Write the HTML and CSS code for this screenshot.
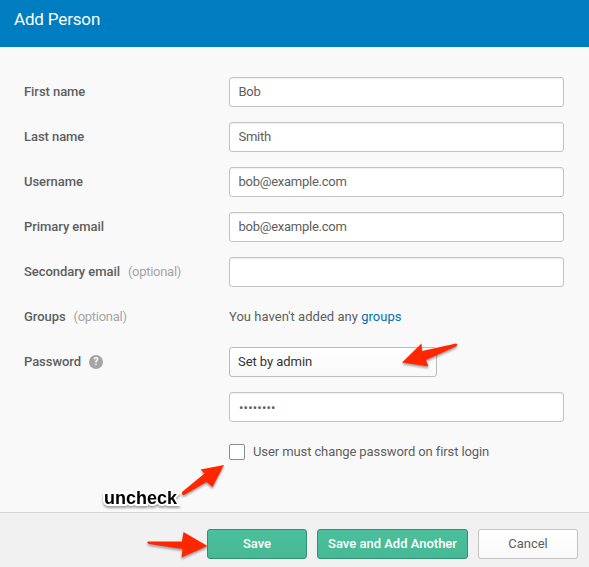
FILE: index.html
```html
<!DOCTYPE html>
<html lang="en">
<head>
<meta charset="utf-8">
<title>Add Person</title>
<link rel="stylesheet" href="styles.css">
</head>
<body>
<form class="dialog">
  <header class="header"><h1 class="title">Add Person</h1></header>
  <main class="fields">
    <div class="row"><label class="label" for="first">First name</label><input class="input" id="first" value="Bob"></div>
    <div class="row"><label class="label" for="last">Last name</label><input class="input" id="last" value="Smith"></div>
    <div class="row"><label class="label" for="user">Username</label><input class="input" id="user" value="bob@example.com"></div>
    <div class="row"><label class="label" for="email">Primary email</label><input class="input" id="email" value="bob@example.com"></div>
    <div class="row"><label class="label" for="second"><span>Secondary email</span><span class="optional">(optional)</span></label><input class="input" id="second"></div>
    <div class="row"><span class="label"><span>Groups</span><span class="optional">(optional)</span></span><p class="note">You haven't added any <a class="link">groups</a></p></div>
    <div class="row"><span class="label"><span>Password</span><span class="help">?</span></span><button type="button" class="select">Set by admin</button></div>
    <div class="row"><span class="label"></span><input class="input dots" value="••••••••"></div>
    <div class="row"><span class="label"></span><label class="check"><span class="box"></span><span>User must change password on first login</span></label></div>
  </main>
  <footer class="footer">
    <button type="button" class="button primary save">Save</button>
    <button type="button" class="button primary another">Save and Add Another</button>
    <button type="button" class="button cancel">Cancel</button>
  </footer>
  <svg class="arrows" width="589" height="567" viewBox="0 0 589 567">
    <path d="M402 362.500L421.500 343.500L422 351L456 343.500Q458.500 344.500 456 346.500L426 360L428.500 366.500Z"/>
    <path d="M224 465L200.500 469.500L204.500 473.500L182 492Q181.500 496 185 494.500L206.500 482L212.500 487Z"/>
    <path d="M207.500 546L183.500 532L182 541.500L148 541.500Q146 543 149 544L182.500 549L181.500 557.500Z"/>
  </svg>
  <span class="callout">uncheck</span>
</form>
</body>
</html>
```
FILE: styles.css
```css
* { box-sizing: border-box; }
body { margin: 0; background: #f9f9f9; color: #5e5e5e; font: 13px/18px Roboto, "Liberation Sans", sans-serif; }
.dialog { position: relative; display: flex; flex-direction: column; width: 589px; height: 567px; overflow: hidden; }
.header { height: 47px; padding: 8px 14px 0; background: #007dc1; color: #fff; }
.title { margin: 0; font-size: 17px; line-height: 22px; font-weight: 400; letter-spacing: -0.16px; }
.fields { flex: 1; display: flex; flex-direction: column; gap: 15px; padding: 30px 25px 0 24px; }
.row { display: flex; align-items: center; height: 30px; }
.label { display: flex; align-items: center; gap: 8px; width: 205px; font-weight: 500; letter-spacing: -0.06px; white-space: nowrap; }
.optional { color: #a5a5a5; font-weight: 400; letter-spacing: -0.28px; }
.help { width: 14px; height: 14px; border-radius: 50%; background: #a5a5a5; color: #fff; font-size: 10px; line-height: 14px; font-weight: 700; text-align: center; }
.input { width: 335px; height: 30px; padding: 0 9px 1px 8.5px; border: 1px solid #c3c3c3; border-radius: 3px; background: #fff; box-shadow: inset 0 1px 2px #eee; color: #5e5e5e; font: inherit; letter-spacing: -0.25px; outline: 0; }
.dots { padding: 0 9px; letter-spacing: 0.2px; }
.note { margin: 0; letter-spacing: 0.03px; }
.link { color: #0071b3; }
.select { width: 208px; height: 30px; padding: 0 8px; border: 1px solid #bcbcbc; border-radius: 3px; background: linear-gradient(#fff, #f9f9f9); color: #333; font: inherit; text-align: left; letter-spacing: -0.06px; }
.check { display: flex; align-items: center; gap: 8px; letter-spacing: -0.1px; }
.box { width: 16px; height: 16px; border: 1px solid #8c8c8c; border-radius: 2px; background: #fff; }
.footer { display: flex; justify-content: flex-end; gap: 10px; height: 55px; padding: 16px 11px 0; border-top: 1px solid #d6d6d6; background: #f1f1f1; }
.button { height: 30px; padding: 0; border: 1px solid; border-radius: 3px; font: inherit; }
.primary { border-color: #2f8f72; background: linear-gradient(#4cbf9c, #46b894); color: #fff; font-weight: 500; }
.save { width: 100px; }
.another { width: 151px; }
.cancel { width: 100px; border-color: #c3c3c3; background: linear-gradient(#fff, #f9f9f9); color: #5e5e5e; }
.arrows { position: absolute; left: 0; top: 0; fill: #ff2600; pointer-events: none; filter: drop-shadow(0 2px 1px rgba(0, 0, 0, 0.35)); }
.callout { position: absolute; left: 104px; top: 488px; color: #000; font: 700 18px/20px "Liberation Sans", sans-serif; -webkit-text-stroke: 4px #fff; paint-order: stroke fill; filter: drop-shadow(0 2px 1px rgba(0, 0, 0, 0.35)); }
```
